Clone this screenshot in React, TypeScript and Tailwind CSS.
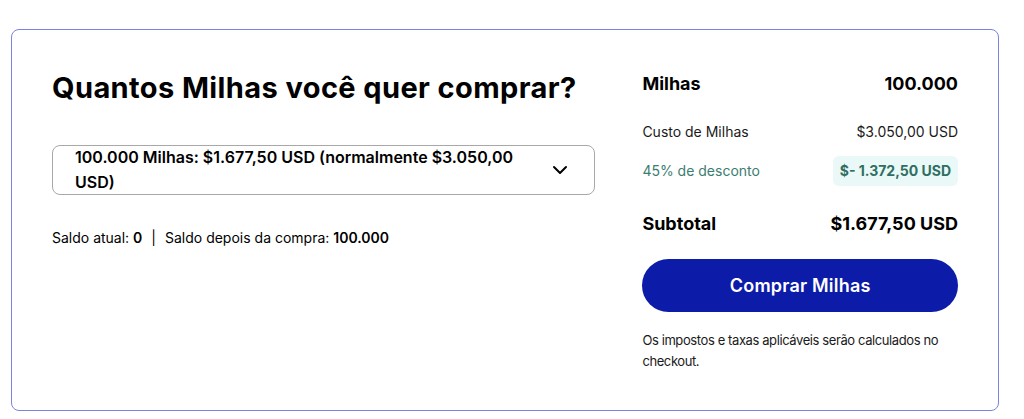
import { ChevronDown } from "lucide-react";

const font = { fontFamily: "Inter, 'Noto Sans', Arial, sans-serif" };

function Row({ label, value, className }: { label: string; value: React.ReactNode; className?: string }) {
  return (
    <div className={"flex items-center justify-between " + (className ?? "")}>
      <span>{label}</span>
      {value}
    </div>
  );
}

export default function App() {
  return (
    <div className="bg-white w-[1024px] h-[419px] pt-[29px] pl-[11px]" style={font}>
      <div className="w-[988px] h-[382px] border border-[#7b83e0] rounded-lg flex pl-10 pr-10 text-[#111]">
        {/* Left */}
        <div className="w-[544px] pt-[40px]">
          <h2 className="text-[29px] leading-[36px] font-bold tracking-[0.4px] text-black">
            Quantos Milhas você quer comprar?
          </h2>
          <div className="mt-[39px] h-[50px] border border-[#a8a8a8] rounded-lg flex items-center pl-[22px] pr-[22px]">
            <div className="flex-1 text-[16px] leading-[25px] font-semibold text-black">
              100.000 Milhas: $1.677,50 USD (normalmente $3.050,00 USD)
            </div>
            <ChevronDown className="w-6 h-6 ml-4 text-black" strokeWidth={2} />
          </div>
          <p className="mt-[33px] text-[14px] leading-5 text-black">
            Saldo atual: <span className="font-semibold">0</span>
            <span className="mx-[9px]">|</span>
            Saldo depois da compra: <span className="font-semibold">100.000</span>
          </p>
        </div>

        {/* Right */}
        <div className="w-[316px] ml-[47px] pt-[42px]">
          <Row
            label="Milhas"
            value={<span>100.000</span>}
            className="text-[18px] leading-6 font-bold text-black"
          />
          <Row
            label="Custo de Milhas"
            value={<span>$3.050,00 USD</span>}
            className="mt-[26px] text-[14px] leading-5 text-[#1a1a1a]"
          />
          <Row
            label="45% de desconto"
            value={
              <span className="bg-[#eaf9f7] text-[#2f6e62] font-bold rounded-md px-[7px] h-[30px] flex items-center">
                $- 1.372,50 USD
              </span>
            }
            className="mt-[14px] text-[14px] leading-5 text-[#3d7d70]"
          />
          <Row
            label="Subtotal"
            value={<span>$1.677,50 USD</span>}
            className="mt-[26px] text-[18px] leading-6 font-bold text-black"
          />
          <button className="mt-[23px] w-full h-[53px] rounded-full bg-[#0d1ca8] text-white text-[18px] font-semibold tracking-[0.2px]">
            Comprar Milhas
          </button>
          <p className="mt-[18px] text-[13px] leading-[21px] tracking-[-0.4px] text-[#1a1a1a]">
            Os impostos e taxas aplicáveis serão calculados no checkout.
          </p>
        </div>
      </div>
    </div>
  );
}
